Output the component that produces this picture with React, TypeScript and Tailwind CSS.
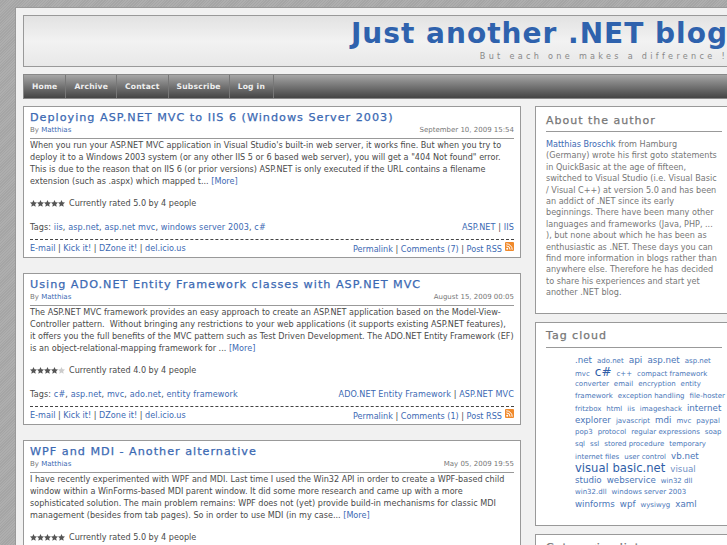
import React from "react";

const A = ({ children }: { children: React.ReactNode }) => (
  <a className="text-[#3b69b3]">{children}</a>
);

const Star = ({ on }: { on: boolean }) => (
  <svg width="7" height="7" viewBox="0 0 10 10" className="block">
    <path d="M5 0l1.5 3.3 3.5.4-2.6 2.4.7 3.6L5 7.9 1.9 9.7l.7-3.6L0 3.7l3.5-.4z" fill={on ? "#555" : "#ccc"} />
  </svg>
);

const Rss = () => (
  <svg width="9" height="9" viewBox="0 0 9 9" className="inline-block ml-[3px] align-[1px]">
    <rect width="9" height="9" rx="1" fill="#f08a2c" />
    <circle cx="2.2" cy="6.8" r="1" fill="#fff" />
    <path d="M1.3 3.9a3.8 3.8 0 0 1 3.8 3.8M1.3 1.8a5.9 5.9 0 0 1 5.9 5.9" stroke="#fff" strokeWidth="1" fill="none" />
  </svg>
);

type PostProps = {
  title: string;
  date: string;
  body: React.ReactNode;
  rating: number;
  tags: string[];
  cats: string[];
  comments: number;
  ratingText: string;
};

const Post = ({ title, date, body, rating, tags, cats, comments, ratingText }: PostProps) => (
  <div className="h-[152px] shrink-0 border border-[#999] bg-white px-[6px] pt-[4px] text-[#4a4a4a]">
    <h2 className="text-[11.2px] leading-[14px] tracking-[1px] font-medium text-[#3b69b3] [-webkit-text-stroke:0.25px_#3b69b3]">{title}</h2>
    <div className="flex items-end justify-between text-[7px] leading-[10px] text-[#777] border-b border-[#999] pb-[3px]">
      <span>By <A>Matthias</A></span>
      <span>{date}</span>
    </div>
    <div className="text-[8.1px] leading-[12px]">{body}</div>
    <div className="flex items-center mt-[10px] text-[8.1px] leading-[12px]">
      <span className="flex mr-[4px]">
        {[0, 1, 2, 3, 4].map((i) => (
          <Star key={i} on={i < rating} />
        ))}
      </span>
      {ratingText}
    </div>
    <div className="flex justify-between text-[8.1px] leading-[12px] tracking-[0.1px] mt-[12px] pb-[6px] border-b border-dashed border-[#444]">
      <span>
        Tags:{" "}
        {tags.map((t, i) => (
          <span key={t}>
            <A>{t}</A>
            {i < tags.length - 1 ? ", " : ""}
          </span>
        ))}
      </span>
      <span>
        {cats.map((c, i) => (
          <span key={c}>
            <A>{c}</A>
            {i < cats.length - 1 ? " | " : ""}
          </span>
        ))}
      </span>
    </div>
    <div className="flex justify-between text-[8.1px] leading-[12px] pt-[2px]">
      <span>
        <A>E-mail</A> | <A>Kick it!</A> | <A>DZone it!</A> | <A>del.icio.us</A>
      </span>
      <span>
        <A>Permalink</A> | <A>Comments ({comments})</A> | <A>Post RSS</A>
        <Rss />
      </span>
    </div>
  </div>
);

const s = "text-[7px]";
const m = "text-[8.7px]";
const l = "text-[9px]";

const cloud: [string, string][][] = [
  [[".net", m], ["ado.net", s], ["api", l], ["asp.net", m], ["asp.net", s]],
  [["mvc", s], ["c#", "text-[12px] text-[#2f5ea8]"], ["c++", s], ["compact framework", s]],
  [["converter", s], ["email", s], ["encryption", s], ["entity", s]],
  [["framework", s], ["exception handling", s], ["file-hoster", s]],
  [["fritzbox", s], ["html", s], ["iis", s], ["imageshack", s], ["internet", m]],
  [["explorer", m], ["javascript", s], ["mdi", m], ["mvc", s], ["paypal", s]],
  [["pop3", s], ["protocol", s], ["regular expressions", s], ["soap", s]],
  [["sql", s], ["ssl", s], ["stored procedure", s], ["temporary", s]],
  [["internet files", s], ["user control", s], ["vb.net", m]],
  [["visual basic.net", "text-[11.6px] text-[#2f5ea8]"], ["visual", "text-[8.7px] text-[#6f8fc4]"]],
  [["studio", m], ["webservice", m], ["win32 dll", s]],
  [["win32.dll", s], ["windows server 2003", s]],
  [["winforms", m], ["wpf", m], ["wysiwyg", s], ["xaml", m]],
];

export default function App() {
  return (
    <div className="w-[727px] h-[545px] overflow-hidden bg-[#aaaaaa] bg-[repeating-linear-gradient(135deg,#a5a5a5_0px,#a5a5a5_1px,#aeaeae_1px,#aeaeae_2px)] pl-[15px] pt-[7px] font-['DejaVu_Sans',sans-serif]">
      <div className="w-[760px] h-[600px] bg-[#f1f1f1] border border-[#999] pl-[7px] pt-[7px]">
        <div className="w-[760px] h-[52px] border border-[#999] bg-gradient-to-b from-[#e2e2e2] via-[#f2f2f2] to-[#e8e8e8] pr-[54px] pt-px text-right">
          <h1 className="text-[28px] leading-[33px] font-bold tracking-[1px] text-[#2f62ad]">Just another .NET blog</h1>
          <p className="text-[8.1px] leading-[12px] tracking-[3.3px] text-[#888]">But each one makes a difference !</p>
        </div>
        <nav className="w-[760px] h-[25px] mt-[7px] flex border border-[#888] bg-gradient-to-b from-[#a6a6a6] to-[#454545] text-[7.6px] font-bold tracking-[0.2px] text-[#eee]">
          {["Home", "Archive", "Contact", "Subscribe", "Log in"].map((n) => (
            <span key={n} className="px-[8px] leading-[23px] border-r border-[#777]">{n}</span>
          ))}
        </nav>
        <div className="flex gap-[14px] mt-[7px] items-start">
          <main className="w-[498px] shrink-0 flex flex-col gap-[15px]">
            <Post
              title="Deploying ASP.NET MVC to IIS 6 (Windows Server 2003)"
              date="September 10, 2009 15:54"
              rating={5}
              ratingText="Currently rated 5.0 by 4 people"
              tags={["iis", "asp.net", "asp.net mvc", "windows server 2003", "c#"]}
              cats={["ASP.NET", "IIS"]}
              comments={7}
              body={<>When you run your ASP.NET MVC application in Visual Studio's built-in web server, it works fine. But when you try to<br />deploy it to a Windows 2003 system (or any other IIS 5 or 6 based web server), you will get a "404 Not found" error.<br />This is due to the reason that on IIS 6 (or prior versions) ASP.NET is only executed if the URL contains a filename<br />extension (such as .aspx) which mapped t... <A>[More]</A></>}
            />
            <Post
              title="Using ADO.NET Entity Framework classes with ASP.NET MVC"
              date="August 15, 2009 00:05"
              rating={4}
              ratingText="Currently rated 4.0 by 4 people"
              tags={["c#", "asp.net", "mvc", "ado.net", "entity framework"]}
              cats={["ADO.NET Entity Framework", "ASP.NET MVC"]}
              comments={1}
              body={<>The ASP.NET MVC framework provides an easy approach to create an ASP.NET application based on the Model-View-<br />Controller pattern.&nbsp; Without bringing any restrictions to your web applications (it supports existing ASP.NET features),<br />it offers you the full benefits of the MVC pattern such as Test Driven Development. The ADO.NET Entity Framework (EF)<br />is an object-relational-mapping framework for ... <A>[More]</A></>}
            />
            <Post
              title="WPF and MDI - Another alternative"
              date="May 05, 2009 19:55"
              rating={5}
              ratingText="Currently rated 5.0 by 4 people"
              tags={["wpf", "mdi"]}
              cats={["WPF"]}
              comments={0}
              body={<>I have recently experimented with WPF and MDI. Last time I used the Win32 API in order to create a WPF-based child<br />window within a WinForms-based MDI parent window. It did some more research and came up with a more<br />sophisticated solution. The main problem remains: WPF does not (yet) provide build-in mechanisms for classic MDI<br />management (besides from tab pages). So in order to use MDI (in my case... <A>[More]</A></>}
            />
          </main>
          <aside className="w-[220px] shrink-0 flex flex-col gap-[8px]">
            <div className="border border-[#999] bg-white h-[208px] pl-[10px] pt-[5px] text-[#777]">
              <h3 className="w-[176px] text-[11px] leading-[18px] font-medium tracking-[1px] text-[#777] [-webkit-text-stroke:0.25px_#777] border-b border-[#999] pb-[1px]">About the author</h3>
              <p className="w-[180px] text-[8.1px] leading-[11.4px] mt-[7px]">
                <A>Matthias Broschk</A> from Hamburg<br />(Germany) wrote his first goto statements<br />in QuickBasic at the age of fifteen,<br />switched to Visual Studio (i.e. Visual Basic<br />/ Visual C++) at version 5.0 and has been<br />an addict of .NET since its early<br />beginnings. There have been many other<br />languages and frameworks (Java, PHP, ...<br />), but none about which he has been as<br />enthusiastic as .NET. These days you can<br />find more information in blogs rather than<br />anywhere else. Therefore he has decided<br />to share his experiences and start yet<br />another .NET blog.
              </p>
            </div>
            <div className="border border-[#999] bg-white h-[204px] pl-[10px] pt-[4px]">
              <h3 className="w-[176px] text-[11px] leading-[18px] font-medium tracking-[1px] text-[#777] [-webkit-text-stroke:0.25px_#777] border-b border-[#999] pb-[2px]">Tag cloud</h3>
              <div className="ml-[29px] mt-[6px] text-[#4a76b8] whitespace-nowrap">
                {cloud.map((row, r) => (
                  <div key={r} className="h-[12px] leading-[12px] flex items-baseline gap-[5px]">
                    {row.map(([t, c], i) => (
                      <a key={i} className={c}>{t}</a>
                    ))}
                  </div>
                ))}
              </div>
            </div>
            <div className="border border-[#999] bg-white h-[60px] pl-[10px] pt-[4px]">
              <h3 className="text-[11px] leading-[18px] font-medium tracking-[1px] text-[#777] [-webkit-text-stroke:0.25px_#777]">Categories list</h3>
            </div>
          </aside>
        </div>
      </div>
    </div>
  );
}
